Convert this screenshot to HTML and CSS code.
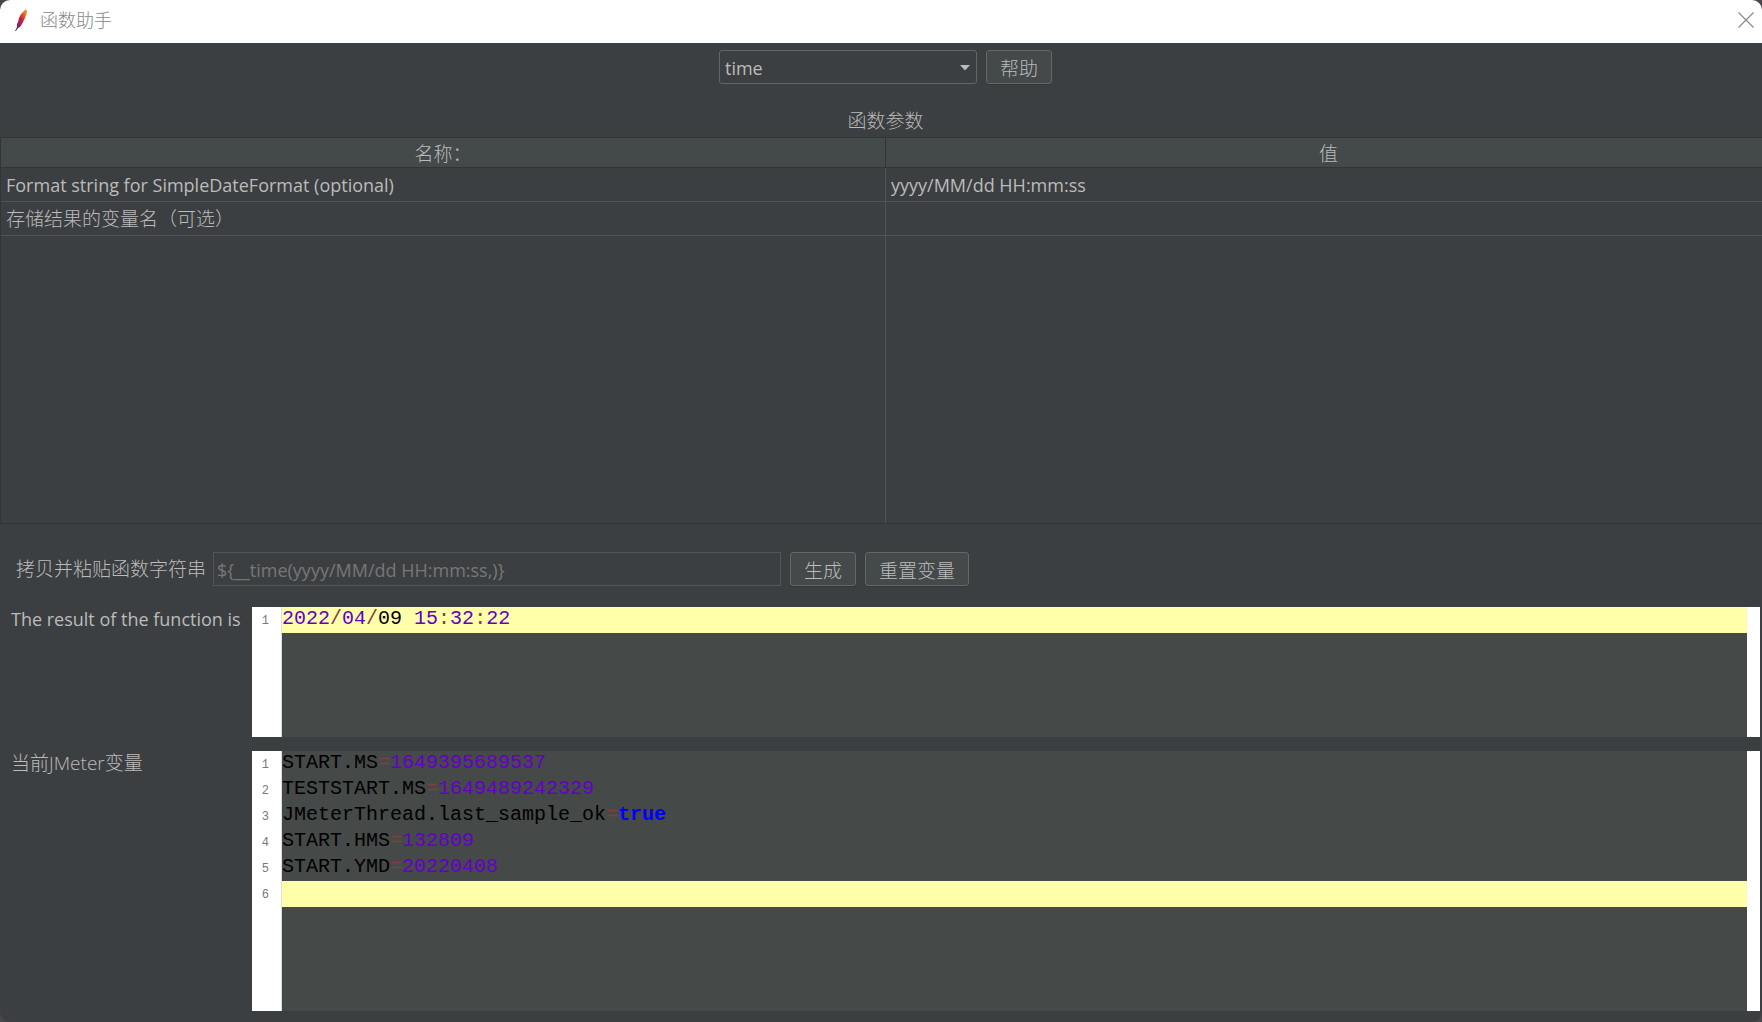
FILE: index.html
```html
<!DOCTYPE html>
<html lang="zh-CN">
<head>
<meta charset="utf-8">
<title>函数助手</title>
<link rel="stylesheet" href="styles.css">
</head>
<body>
<main class="window">
  <header class="titlebar">
    <svg class="logo" width="14" height="24" viewBox="0 0 14 24" aria-hidden="true">
      <defs>
        <linearGradient id="feather" x1="0.8" y1="0" x2="0.2" y2="1">
          <stop offset="0" stop-color="#f69923"/>
          <stop offset="0.3" stop-color="#e0532a"/>
          <stop offset="0.5" stop-color="#cb2138"/>
          <stop offset="0.8" stop-color="#9e2064"/>
          <stop offset="1" stop-color="#4a2a70"/>
        </linearGradient>
      </defs>
      <path fill="url(#feather)" d="M9 3 11 1 12 3 11.500 6 11 7 10 10 9 12 8 14 7 16 5 19 3 20 1.500 21.500 2 18 2 16 3 14 4 10 6 6Z"/>
      <path fill="none" stroke="#3b2a55" d="M2.500 19.500 0.500 23"/>
    </svg>
    <h1 class="title">函数助手</h1>
    <button class="close" aria-label="关闭">
      <svg width="16" height="16" viewBox="0 0 16 16"><path d="M.5.5l15 15M15.500.5l-15 15" fill="none" stroke="#8c8c8c" stroke-width="1.300"/></svg>
    </button>
  </header>

  <section class="functions">
    <div class="chooser">
      <div class="combo">
        <select class="combo-select" aria-label="函数"><option>time</option></select>
        <svg class="combo-arrow" width="10" height="6" viewBox="0 0 10 6" aria-hidden="true"><path d="M0 0h10L5 5.500Z" fill="#bbb"/></svg>
      </div>
      <button class="button">帮助</button>
    </div>

    <h2 class="caption" id="params">函数参数</h2>
    <div class="table-area">
      <table class="params" aria-labelledby="params">
        <thead><tr><th>名称：</th><th>值</th></tr></thead>
        <tbody>
          <tr><td>Format string for SimpleDateFormat (optional)</td><td>yyyy/MM/dd HH:mm:ss</td></tr>
          <tr><td class="han">存储结果的变量名（可选）</td><td></td></tr>
          <tr class="filler"><td></td><td></td></tr>
        </tbody>
      </table>
    </div>
  </section>

  <div class="generate">
    <label class="han" for="call">拷贝并粘贴函数字符串</label>
    <input class="call" id="call" type="text" readonly value="${__time(yyyy/MM/dd HH:mm:ss,)}">
    <button class="button">生成</button>
    <button class="button">重置变量</button>
  </div>

  <div class="outputs">
    <div class="output-label" id="result">The result of the function is</div>
    <div class="editor editor-result" role="textbox" aria-multiline="true" aria-labelledby="result">
      <div class="gutter"><span>1</span></div>
      <div class="code">
        <div class="line current"><span class="num">2022</span><span class="op">/</span><span class="num">04</span><span class="op">/</span>09 <span class="num">15</span><span class="op">:</span><span class="num">32</span><span class="op">:</span><span class="num">22</span></div>
      </div>
    </div>
    <div class="output-label han" id="vars">当前JMeter变量</div>
    <div class="editor editor-vars" role="textbox" aria-multiline="true" aria-labelledby="vars">
      <div class="gutter"><span>1</span><span>2</span><span>3</span><span>4</span><span>5</span><span>6</span></div>
      <div class="code">
        <div class="line">START.MS<span class="op">=</span><span class="num">1649395689537</span></div>
        <div class="line">TESTSTART.MS<span class="op">=</span><span class="num">1649489242329</span></div>
        <div class="line">JMeterThread.last_sample_ok<span class="op">=</span><span class="bool">true</span></div>
        <div class="line">START.HMS<span class="op">=</span><span class="num">132809</span></div>
        <div class="line">START.YMD<span class="op">=</span><span class="num">20220408</span></div>
        <div class="line current"></div>
      </div>
    </div>
  </div>
</main>
</body>
</html>
```

FILE: styles.css
```css
* {
  box-sizing: border-box;
}

body {
  margin: 0;
  background: #4b464b;
  color: #bbb;
  font: 18px/26px "Open Sans", "Noto Sans CJK SC", sans-serif;
}

button,
input,
select {
  font: inherit;
  color: inherit;
}

.window {
  display: flex;
  flex-direction: column;
  min-height: 100vh;
  background: #3c3f41;
  border-radius: 10px;
  overflow: hidden;
}

.titlebar {
  display: flex;
  align-items: center;
  height: 43px;
  padding: 0 8px 3px 15px;
  background: #fff;
}

.title {
  flex: 1;
  margin: 0 0 0 11px;
  color: #888;
  font-size: 18px;
  font-weight: 300;
}

.close {
  display: flex;
  padding: 0;
  border: 0;
  background: none;
}

/* The upper pane runs a little past the right edge of the window. */
.functions {
  flex: 1;
  display: flex;
  flex-direction: column;
  margin-right: -9px;
}

.chooser {
  display: flex;
  justify-content: center;
  gap: 9px;
  padding: 7px 0;
}

.combo {
  position: relative;
  width: 258px;
}

.combo-select {
  display: block;
  width: 100%;
  height: 34px;
  padding: 1px 5px 0;
  appearance: none;
  background: #3c3f41;
  border: 1px solid #646464;
  border-radius: 3px;
}

.combo-arrow {
  position: absolute;
  right: 7px;
  top: 15px;
  pointer-events: none;
}

.button {
  height: 34px;
  padding: 1px 13px 0;
  background: #44494a;
  border: 1px solid #656868;
  border-radius: 3px;
  box-shadow: 0 1px 1px #333638;
  font-family: "Noto Sans CJK SC", sans-serif;
  font-size: 19px;
  font-weight: 300;
  line-height: 26px;
}

.caption {
  margin: 17px 0 3px;
  text-align: center;
  font-size: 19px;
  font-weight: 300;
}

.han {
  font-size: 19px;
  font-weight: 300;
}

.table-area {
  flex: 1;
  display: flex;
}

.params {
  width: 100%;
  table-layout: fixed;
  border-collapse: separate;
  border-spacing: 0;
  border: 1px solid #323537;
  border-right: 0;
}

.params th {
  height: 30px;
  padding: 2px 0 0;
  background: #44494a;
  border-bottom: 1px solid #323537;
  font-size: 19px;
  font-weight: 300;
}

.params td {
  height: 34px;
  padding: 0 5px;
  border-bottom: 1px solid #505355;
}

.params th:first-child {
  border-right: 1px solid #323537;
}

.params td:first-child {
  border-right: 1px solid #505355;
}

.params .filler td {
  height: auto;
  border-bottom: 0;
}

.generate {
  display: flex;
  align-items: center;
  gap: 9px;
  padding: 28px 16px 21px;
}

.generate label {
  width: 188px;
  white-space: nowrap;
}

.call {
  width: 568px;
  height: 34px;
  padding: 1px 3px 0;
  background: #3c3f41;
  border: 1px solid #555;
  color: #777;
}

.outputs {
  display: grid;
  grid-template-columns: 230px 1fr;
  gap: 14px 11px;
  padding: 0 2px 11px 11px;
}

.output-label {
  line-height: 24px;
}

.editor {
  display: flex;
  background: #454948;
  border-right: 13px solid #fff;
}

.editor-result {
  min-height: 130px;
}

.editor-vars {
  min-height: 260px;
}

.gutter {
  display: flex;
  flex-direction: column;
  width: 30px;
  padding-right: 12px;
  background: #fff;
  border-right: 1px solid #ddd;
  color: #777;
  font: 12px/28px "Liberation Mono", monospace;
  text-align: right;
}

.gutter span {
  height: 26px;
}

.code {
  flex: 1;
  color: #000;
  font: 20px/24px "Liberation Mono", monospace;
}

.line {
  height: 26px;
  white-space: pre;
}

.current {
  background: #ffffaa;
}

.num {
  color: #6400c8;
}

.op {
  color: #804040;
}

.bool {
  color: #00f;
  font-weight: bold;
}
```
